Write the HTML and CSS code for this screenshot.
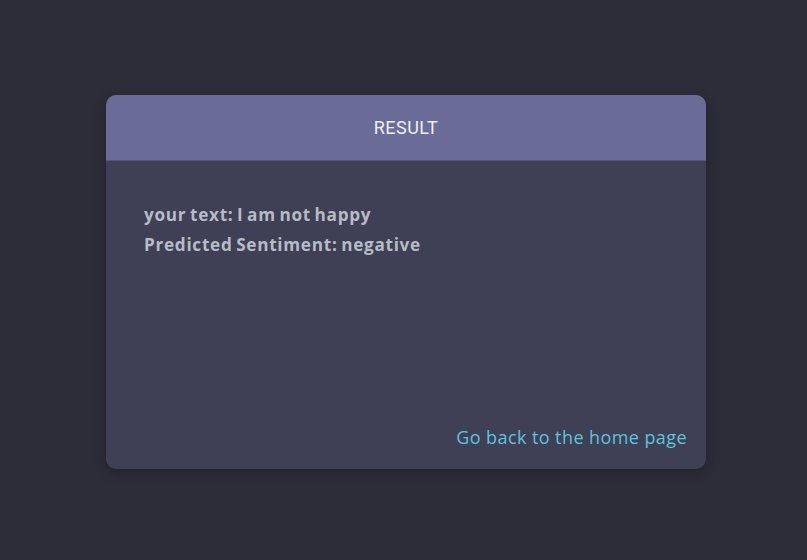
FILE: index.html
```html
<!DOCTYPE html>
<html>
<head>
<meta charset="utf-8">
<link rel="stylesheet" href="styles.css">
</head>
<body>
<div class="card">
  <div class="card-header">RESULT</div>
  <div class="card-body">
    <p class="line">your text: I am not happy</p>
    <p class="line">Predicted Sentiment: negative</p>
  </div>
  <div class="card-footer"><a href="#" class="back">Go back to the home page</a></div>
</div>
</body>
</html>
```
FILE: styles.css
```css
html, body { margin: 0; padding: 0; }
body {
  background: #2d2c39;
  width: 807px;
  height: 560px;
  overflow: hidden;
  font-family: "Open Sans", "DejaVu Sans", sans-serif;
}
.card {
  margin: 95px 0 0 106px;
  width: 600px;
  height: 374px;
  background: #3f3f55;
  border-radius: 10px;
  overflow: hidden;
  display: flex;
  flex-direction: column;
  box-shadow: 0 4px 12px rgba(0,0,0,0.25);
}
.card-header {
  height: 65px;
  background: #6b6b98;
  border-bottom: 1px solid #55557a;
  color: #eceef4;
  font-family: Roboto, sans-serif;
  font-size: 18px;
  letter-spacing: 0.5px;
  display: flex;
  align-items: center;
  justify-content: center;
}
.card-body {
  flex: 1;
  padding: 39px 38px 0;
}
.line {
  margin: 0;
  color: #b6bcc4;
  font-weight: 700;
  font-size: 17.2px;
  line-height: 30px;
  letter-spacing: 0.7px;
  word-spacing: -1.5px;
}
.card-footer {
  display: flex;
  justify-content: flex-end;
  padding: 0 19px 20px;
}
.back {
  color: #5ec3dc;
  text-decoration: none;
  font-size: 18px;
  line-height: 24px;
  letter-spacing: 0.42px;
}
```
